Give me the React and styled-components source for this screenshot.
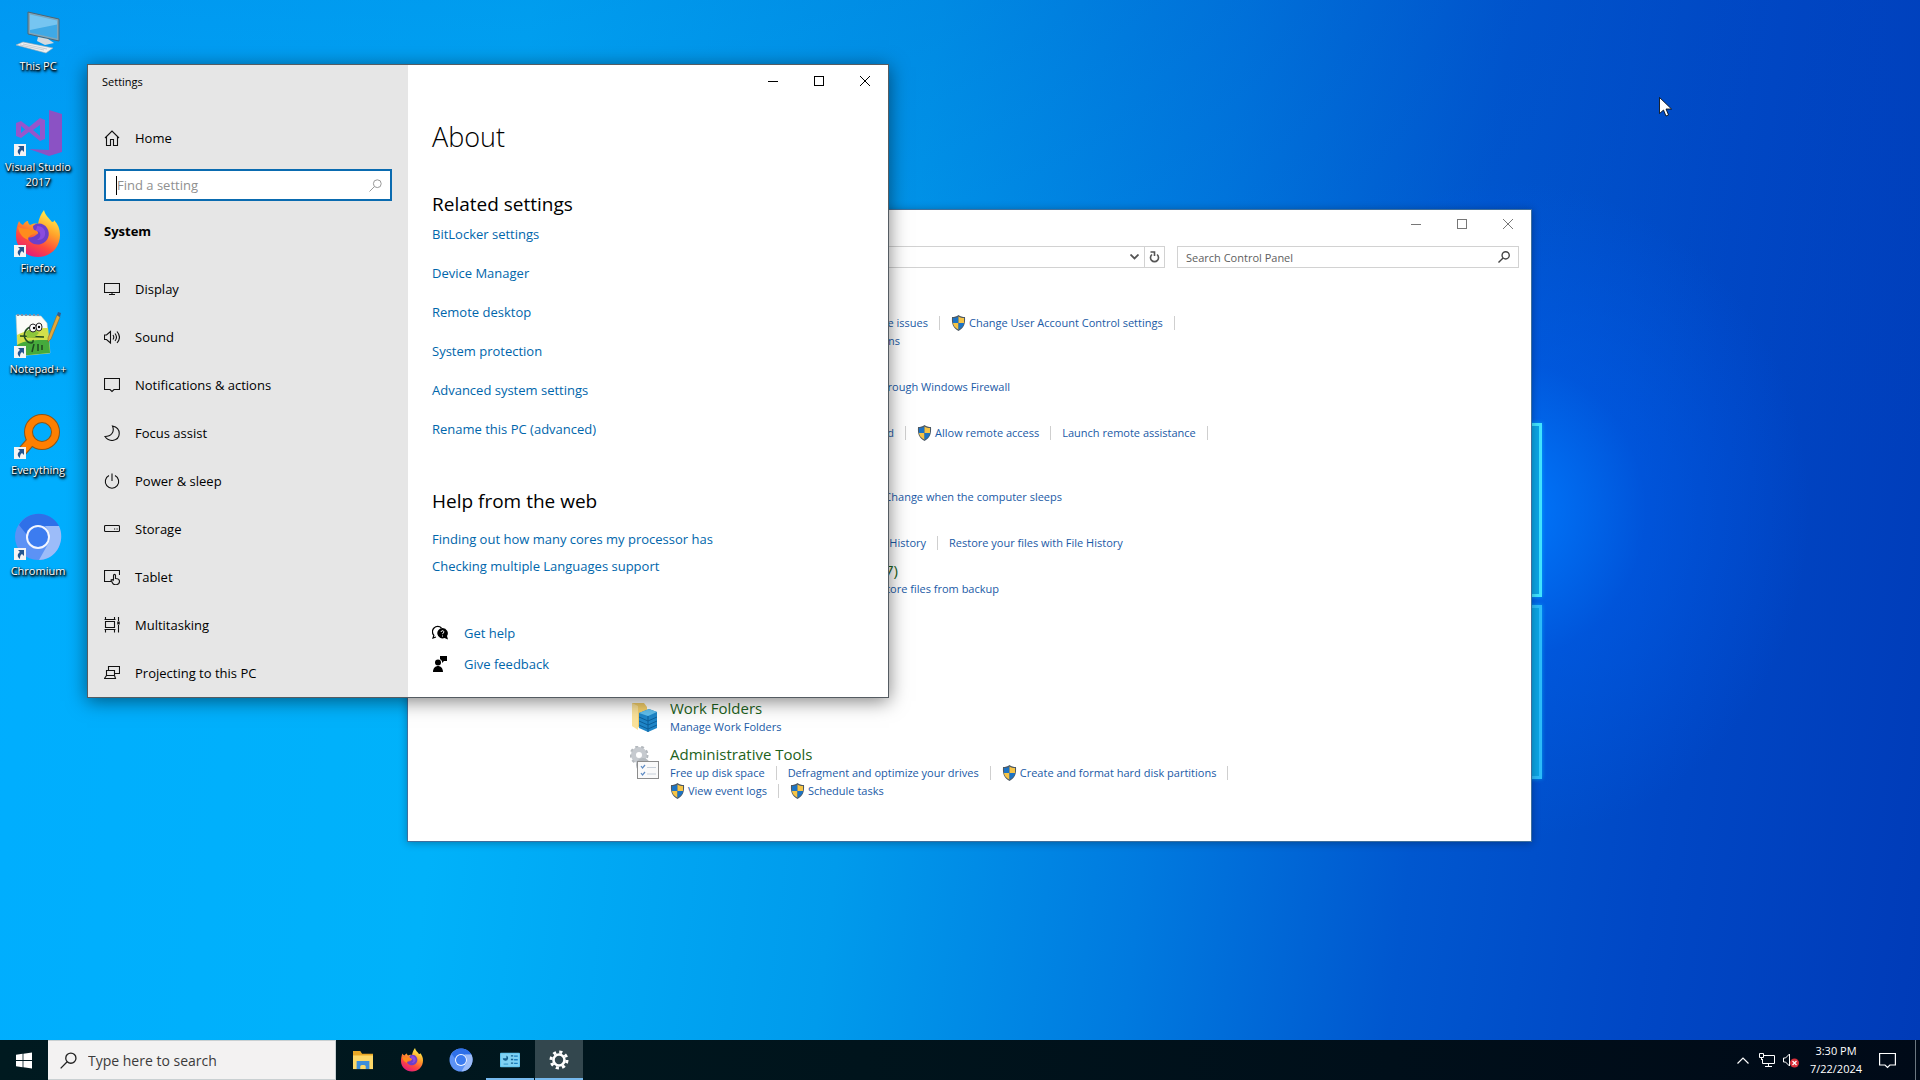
import React from 'react';
import styled, { createGlobalStyle, css } from 'styled-components';

const GlobalStyle = createGlobalStyle`
    * {
        box-sizing: border-box;
    }

    body {
        margin: 0;
        font-family: 'Open Sans', 'Noto Sans', sans-serif;
        font-size: 13px;
        color: #000;
    }

    button, input {
        font-family: inherit;
        font-size: inherit;
        color: inherit;
        border: 0;
        padding: 0;
        margin: 0;
        background: none;
    }

    h1, h2, h3, ul, p {
        margin: 0;
        padding: 0;
        font-weight: 400;
    }

    ul {
        list-style: none;
    }

    a {
        text-decoration: none;
    }

    svg {
        display: block;
        flex: none;
    }
`;

/* Desktop */

const Screen = styled.div`
    display: flex;
    flex-direction: column;
    min-height: 100vh;
`;

const Desktop = styled.main`
    position: relative;
    flex: 1;
    overflow: hidden;
    background:
        radial-gradient(ellipse 300px 330px at 1510px 510px, rgba(0, 122, 255, 0.95), rgba(0, 95, 240, 0.45) 45%, rgba(0, 90, 230, 0) 100%),
        linear-gradient(180deg, rgba(0, 70, 190, 0.2), rgba(0, 120, 220, 0) 45%),
        linear-gradient(97deg, #00adff 0%, #00b2fa 26%, #009bec 46%, #007adf 61%, #0057cf 74%, #0047c5 86%, #003bb8 100%);
`;

const LogoPanes = styled.div`
    position: absolute;
    left: 1370px;
    top: 423px;
    display: grid;
    gap: 8px;
`;

const Pane = styled.div`
    width: 172px;
    height: 174px;
    border: 3px solid ${({ $bright }) => ($bright ? '#41e4ff' : '#2cbcfa')};
    border-left: 0;
    background: #0ba4e4;
    box-shadow: 0 0 4px rgba(0, 200, 255, 0.6);
`;

const Shortcuts = styled.ul`
    width: 76px;
    display: flex;
    flex-direction: column;
`;

const Shortcut = styled.li`
    height: 101px;
    padding-top: 8px;

    a {
        display: flex;
        flex-direction: column;
        align-items: center;
        gap: 2px;
        color: #fff;
        font-size: 11px;
        line-height: 15px;
        text-align: center;
        text-shadow: 1px 1px 2px #000, 0 1px 2px #000, 1px 2px 3px #000;
    }
`;

const Cursor = styled.svg`
    position: absolute;
    left: 1659px;
    top: 97px;
`;

/* Windows */

const Frame = styled.section`
    position: absolute;
    background: #fff;
    border: 1px solid;

    ${({ $active }) => ($active ? css`
        border-color: #555c62;
        box-shadow: 0 3px 18px rgba(0, 0, 0, 0.5);
    ` : css`
        border-color: #3f6f9c;
        box-shadow: 0 1px 8px rgba(0, 0, 0, 0.3);
    `)}
`;

const SettingsFrame = styled(Frame)`
    left: 87px;
    top: 64px;
    width: 802px;
    display: grid;
    grid-template-columns: 2fr 3fr;
`;

const PanelFrame = styled(Frame)`
    left: 407px;
    top: 209px;
    width: 1125px;
`;

const Controls = styled.div`
    display: flex;
    justify-content: flex-end;
    color: ${({ $dim }) => ($dim ? '#777' : '#000')};

    button {
        width: 46px;
        height: ${({ $dim }) => ($dim ? '28px' : '32px')};
        display: grid;
        place-items: center;
    }
`;

const WindowControls = ({ dim }) => (
    <Controls $dim={dim}>
        <button type='button' aria-label='Minimize'>
            <svg width='10' height='10' stroke='currentColor'><path d='M0 5.5h10' /></svg>
        </button>
        <button type='button' aria-label='Maximize'>
            <svg width='10' height='10' stroke='currentColor' fill='none'><rect x='.5' y='.5' width='9' height='9' /></svg>
        </button>
        <button type='button' aria-label='Close'>
            <svg width='10' height='10' stroke='currentColor'><path d='M0 0l10 10M10 0L0 10' /></svg>
        </button>
    </Controls>
);

/* Settings window */

const Sidebar = styled.nav`
    background: #e6e6e6;
    padding: 0 16px;
`;

const SidebarTitle = styled.p`
    margin-left: -2px;
    font-size: 11px;
    line-height: 34px;
`;

const NavItem = styled.a`
    display: flex;
    align-items: center;
    gap: 15px;
    height: 48px;
    color: #000;
`;

const HomeItem = styled(NavItem)`
    margin: 15px 0 7px;
`;

const FindBox = styled.label`
    display: flex;
    align-items: center;
    height: 32px;
    padding: 0 8px 0 10px;
    border: 2px solid #0a6bb0;
    background: #fff;

    input {
        flex: 1;
        min-width: 0;
        outline: 0;
    }

    input::placeholder {
        color: #8f8f8f;
        opacity: 1;
    }
`;

const Caret = styled.span`
    width: 1px;
    height: 19px;
    background: #000;
`;

const SidebarHeading = styled.h2`
    font-size: 13px;
    font-weight: 700;
    line-height: 20px;
    margin: 20px 0 24px;
`;

const About = styled.div`
    h1 {
        padding-left: 24px;
        font-size: 27px;
        font-weight: 300;
        line-height: 40px;
        margin-top: 20px;
    }
`;

const Section = styled.div`
    padding-left: 24px;
    padding-top: ${({ $top }) => $top}px;
    display: flex;
    flex-direction: column;
    align-items: flex-start;

    h2 {
        font-size: 19px;
        line-height: 28px;
        margin-bottom: ${({ $gap }) => $gap}px;
    }
`;

const SettingLink = styled.a`
    display: flex;
    align-items: center;
    gap: 16px;
    height: ${({ $height }) => $height}px;
    color: #0066ab;
`;

/* Control Panel window */

const AddressRow = styled.div`
    display: grid;
    grid-template-columns: 757px 1fr;
    gap: 12px;
    padding: 8px 12px 0 0;
`;

const AddressBar = styled.div`
    display: flex;
    justify-content: flex-end;
    height: 22px;
    border: 1px solid #d2d2d2;

    button {
        width: 20px;
        display: grid;
        place-items: center;
        color: #555;
    }

    button + button {
        border-left: 1px solid #d2d2d2;
    }
`;

const PanelSearch = styled.label`
    display: flex;
    align-items: center;
    height: 22px;
    padding: 0 8px;
    border: 1px solid #d2d2d2;
    font-size: 11px;

    input {
        flex: 1;
        outline: 0;
    }

    input::placeholder {
        color: #606060;
        opacity: 1;
    }
`;

const Categories = styled.ul`
    padding: 26px 0 33px 222px;
`;

const Category = styled.li`
    display: grid;
    grid-template-columns: 40px 1fr;
    padding-bottom: 8px;

    svg.category-icon {
        margin-top: 2px;
    }
`;

const CategoryTitle = styled.h3`
    width: ${({ $width }) => ($width ? `${$width}px` : 'auto')};
    height: 20px;
    display: flex;
    justify-content: ${({ $width }) => ($width ? 'flex-end' : 'flex-start')};
    font-size: 15px;
    line-height: 20px;
    color: #1d6220;
    white-space: nowrap;
`;

const TaskLine = styled.div`
    display: flex;
    height: 18px;
    font-size: 11px;
    line-height: 18px;
    white-space: nowrap;
`;

const Lead = styled.div`
    width: ${({ $width }) => $width}px;
    display: flex;
    justify-content: flex-end;
`;

const Task = styled.a`
    display: flex;
    align-items: center;
    gap: 3px;
    color: #1a5aa6;
`;

const Divider = styled.span`
    width: 1px;
    height: 14px;
    margin: 2px 11px;
    background: #cfcfcf;
`;

/* Taskbar */

const Taskbar = styled.footer`
    display: flex;
    height: 40px;
    background: linear-gradient(90deg, #001a20, #00141c 45%, #000a18);
    color: #fff;
`;

const StartButton = styled.button`
    width: 48px;
    display: grid;
    place-items: center;
`;

const TaskSearch = styled.label`
    display: flex;
    align-items: center;
    gap: 11px;
    width: 288px;
    padding-left: 12px;
    margin-right: 3px;
    background: #f3f2f2;
    border: 1px solid #c9d0d2;
    border-left: 0;
    color: #222;

    input {
        flex: 1;
        min-width: 0;
        font-size: 14px;
        outline: 0;
    }

    input::placeholder {
        color: #3b3b3b;
        opacity: 1;
    }
`;

const AppButton = styled.button`
    width: 48px;
    margin-right: 1px;
    display: grid;
    place-items: center;
    background: ${({ $active }) => ($active ? '#33474e' : 'transparent')};
    box-shadow: ${({ $open }) => ($open ? 'inset 0 -2px #76b9ed' : 'none')};
`;

const Tray = styled.div`
    margin-left: auto;
    display: flex;
    align-items: center;

    > button {
        width: 24px;
        height: 40px;
        display: grid;
        place-items: center;
    }
`;

const Clock = styled.time`
    width: 66px;
    text-align: center;
    font-size: 11px;
    line-height: 18px;
`;

const ActionCenter = styled.button`
    && {
        width: 36px;
        margin: 0 10px 0 0;
    }
`;

const ShowDesktop = styled.button`
    && {
        width: 5px;
        border-left: 1px solid #6c7780;
    }
`;

/* Drawings */

const ShortcutArrow = () => (
    <g>
        <rect x='0' y='35' width='12' height='12' fill='#f4f4f4' />
        <path d='M4 37h6v6l-2-2c-2 1-2 3-2 5-3-2-3-5 0-7z' fill='#24558f' />
    </g>
);

const ThisPcIcon = () => (
    <svg width='48' height='48' viewBox='0 0 48 48'>
        <path d='M14 4l31 7v22L14 26z' fill='#7fa6bb' stroke='#4e6675' />
        <path d='M16 6.500l27 6v18l-27-6z' fill='#3fa9e6' />
        <path d='M16 6.500l27 6v4L16 22z' fill='#8fd2f5' opacity='.7' />
        <path d='M24 29l10 2 6 4-9 2-8-4z' fill='#d5dade' />
        <path d='M9 34l30 6-7 5L2 37z' fill='#eef0f2' stroke='#a3adb3' strokeWidth='.6' />
        <path d='M9 36l24 5M6 37l24 5' stroke='#b8bfc4' strokeWidth='.7' />
    </svg>
);

const VisualStudioIcon = () => (
    <svg width='48' height='48' viewBox='0 0 48 48'>
        <path d='M35 1l13 4v38l-13 4-20-7 20 1z' fill='#8b52c4' />
        <path d='M2 14l5-2 8 6 11-9 5 2v19l-5 2-11-9-8 6-5-2zm5 3v7l4-3.500zm19-1l-7 5 7 6z' fill='#9556cc' fillRule='evenodd' />
        <ShortcutArrow />
    </svg>
);

const FirefoxIcon = ({ size, shortcut }) => (
    <svg width={size} height={size} viewBox='0 0 48 48'>
        <defs>
            <linearGradient id='fox' x1='.8' y1='0' x2='.3' y2='1'>
                <stop offset='.05' stopColor='#fff14f' />
                <stop offset='.4' stopColor='#ffa22a' />
                <stop offset='.7' stopColor='#ff4a3d' />
                <stop offset='1' stopColor='#e2197f' />
            </linearGradient>
        </defs>
        <path d='M5 11c1 2 2 3 4 4 1-2 3-4 5-4 0 2 1 3 2 4 2-1 5-2 8-1 1-6 3-10 6-14 1 5 5 8 8 12 2 0 2-1 2-2 4 4 6 9 6 15 0 13-10 22-22 22S2 38 2 26c0-6 1-11 3-15z' fill='url(#fox)' />
        <path d='M19 16c4-4 11-3 14 2 4 6 1 14-6 16-6 2-13-2-13-7 2 1 6 0 8-2 2-1 3-2 1-4-2 0-4-1-4-5z' fill='#6d3fc9' />
        <path d='M23 16c6 0 9 4 8 9-1 4-4 5-8 5 3-2 4-4 3-7-1-2-3-2-5-2 1-1 2-3 2-5z' fill='#8a4be0' />
        <path d='M4 17c3 1 7 2 10 2 4 1 7 1 9 2-1 3-5 3-7 5-2 1-2 3-2 4-7-3-9-8-10-13z' fill='#ff8c1d' />
        {shortcut && <ShortcutArrow />}
    </svg>
);

const NotepadIcon = () => (
    <svg width='48' height='48' viewBox='0 0 48 48'>
        <path d='M2 4l25 1 6 7 3 30-32 3z' fill='#fbfcf7' stroke='#c0c8c0' strokeWidth='.6' />
        <path d='M3 24c10-5 20-7 31-7l2 25-32 3z' fill='#d3e04a' />
        <path d='M3 34c10-6 22-5 32-5l1 13-32 3z' fill='#45aa3c' />
        <path d='M3 4h24' stroke='#7e8fa8' strokeWidth='2' strokeDasharray='2 2' />
        <path d='M16 16c-6 3-7 9-4 13 3 4 8 4 7 0M6 25l24 1M20 33l-2 8M24 33v7M28 34v5' fill='none' stroke='#1f4a20' strokeWidth='1.500' />
        <path d='M12 21c3-4 9-3 13 1l-4 4-8 1z' fill='#8cc63a' />
        <ellipse cx='19' cy='17' rx='3.500' ry='4' fill='#fff' stroke='#222' />
        <ellipse cx='25' cy='16' rx='3' ry='4' fill='#fff' stroke='#222' />
        <circle cx='20' cy='17' r='1.200' /><circle cx='25' cy='16' r='1.200' />
        <path d='M34 27l9-23 3 2-9 22-3 3z' fill='#e2a93a' stroke='#8f6a25' strokeWidth='.6' />
        <path d='M43 4l1-3 3 1-1 4z' fill='#335d8c' />
        <ShortcutArrow />
    </svg>
);

const EverythingIcon = () => (
    <svg width='48' height='48' viewBox='0 0 48 48'>
        <path d='M18 28L5 43' stroke='#8a5518' strokeWidth='10' />
        <circle cx='28' cy='20' r='13.500' fill='none' stroke='#8a5518' strokeWidth='9' />
        <circle cx='28' cy='20' r='13.500' fill='none' stroke='#ff7f00' strokeWidth='7' />
        <path d='M18 28L5 43' stroke='#ff7f00' strokeWidth='8' />
        <ShortcutArrow />
    </svg>
);

const ChromiumIcon = ({ size, shortcut }) => (
    <svg width={size} height={size} viewBox='0 0 48 48'>
        <circle cx='24' cy='24' r='23' fill='#5c92f5' />
        <path d='M5 12C14-3 36-3 45 13H24c-6 0-10 4-11 9z' fill='#2f70e8' />
        <path d='M45 13c7 15-3 34-20 34l9-16c3-5 3-12-3-18z' fill='#9cbcf9' />
        <circle cx='24' cy='24' r='12' fill='#f2f6ff' />
        <circle cx='24' cy='24' r='10' fill='#3c7cf0' />
        {shortcut && <ShortcutArrow />}
    </svg>
);

const Line = ({ children }) => (
    <svg width='16' height='16' viewBox='0 0 16 16' fill='none' stroke='#111' strokeWidth='1.100'>{children}</svg>
);

const HomeIcon = () => <Line><path d='M1 8l7-7 7 7M2.500 7v8.500h4V9.500h3v6h4V7' /></Line>;
const DisplayIcon = () => <Line><path d='M.5 2.500h15v9H.5zM8 11.500v2M5 13.500h6' /></Line>;
const SoundIcon = () => <Line><path d='M.5 6v4.500h2l4 3.500V2.500L2.500 6zM9 6c1 1.500 1 3 0 4.500M11 4.500c2 2.500 2 5 0 7.500M13 2.500c3 3.500 3 8 0 11.500' /></Line>;
const NotificationIcon = () => <Line><path d='M.5 1.500h15v11H10l-2 2-2-2H.5z' /></Line>;
const MoonIcon = () => <Line><path d='M8.500 1c9 2 9 13 0 14.500-3 0-5.500-1-7.500-4C7 11.500 11 7 8.500 1z' /></Line>;
const PowerIcon = () => <Line><path d='M8 .5V8M5 2.500a6.700 6.700 0 1 0 6 0' /></Line>;
const StorageIcon = () => <Line><rect x='.5' y='4.500' width='15' height='6' rx='1' /><path d='M10 8h1.200M12.500 8h1.200' /></Line>;
const TabletIcon = () => <Line><path d='M7 12.500H.5v-11h15V6M9.500 11V6.500c0-1.500 2-1.500 2 0v3c3 0 4 1 4 3 0 4-6 4-7 1.500L7 11c1-1 1.500-.5 2.500 1' /></Line>;
const MultitaskIcon = () => (
    <Line>
        <path d='M.5 2.500h11M.5 12.500h11M1.500 4.500h9v6h-9zM1.500 0v3M10.500 0v3M1.500 12v3.500M10.500 12v3.500M14.500 0v4M14.500 8v7.500' />
        <path d='M14.500 4.500v3' strokeWidth='2.500' />
    </Line>
);
const ProjectIcon = () => <Line><path d='M4.500 5.500v-4h11v7h-5M2.500 5.500h8v5h-8zM2.500 10.500L.5 13.500h11l-1-3' /></Line>;

const HelpIcon = () => (
    <svg width='16' height='16' viewBox='0 0 16 16'>
        <path d='M2 10.500A5 5 0 1 1 9.500 3M2 10L1 13l3-1' fill='none' stroke='#000' strokeWidth='1.200' />
        <path d='M10.500 3a5.200 5.200 0 0 1 4.500 8l1 3.500-3.500-1.500A5.200 5.200 0 1 1 10.500 3z' />
        <path d='M9 7c.3-2 3.300-1.500 2.800.2-.3.9-1.300.9-1.300 2M10.500 10.500v1' fill='none' stroke='#fff' />
    </svg>
);

const FeedbackIcon = () => (
    <svg width='16' height='16' viewBox='0 0 16 16'>
        <circle cx='6' cy='6.500' r='3' />
        <path d='M1 16c0-8 10-8 10 0zM8 0h7v5h-3l-2 2V5L8 3z' />
    </svg>
);

const Magnifier = ({ size = 13, color, width = 1.2 }) => (
    <svg width={size} height={size} viewBox='0 0 13 13' fill='none' stroke={color} strokeWidth={width}>
        <circle cx='8.300' cy='4.700' r='3.900' />
        <path d='M5.500 7.500L.5 12.500' />
    </svg>
);

const ShieldIcon = () => (
    <svg width='15' height='16' viewBox='0 0 15 16'>
        <path d='M7.500 0c2 1.500 4 2 6.500 2 .5 7-1 11-6.500 14C2 13 .5 9 1 2c2.500 0 4.500-.5 6.500-2z' fill='#4d5964' />
        <path d='M7.500 1.500V8H2V3c2 0 3.800-.4 5.500-1.500z' fill='#1c73c4' />
        <path d='M7.500 1.500V8H13V3c-2 0-3.800-.4-5.500-1.500z' fill='#f6c445' />
        <path d='M2 8h5.500v6.700C4 13 2.300 11 2 8z' fill='#f6c445' />
        <path d='M13 8H7.500v6.700C11 13 12.700 11 13 8z' fill='#1c73c4' />
    </svg>
);

const WorkFoldersIcon = () => (
    <svg className='category-icon' width='32' height='32' viewBox='0 0 32 32'>
        <path d='M2 3h12l3 4v22L2 26z' fill='#f3cf6b' />
        <path d='M2 3l6 3v24l-6-4z' fill='#fbe29a' />
        <path d='M9 13l10-4 8 3v16l-9 4-9-4z' fill='#1f86c8' />
        <path d='M9 13l9 3 9-4-8-3z' fill='#62c0ee' />
        <path d='M9 17l9 4 9-4M9 21l9 4 9-4M9 25l9 4 9-4M18 16v16' fill='none' stroke='#0d5f9a' />
    </svg>
);

const AdminToolsIcon = () => (
    <svg className='category-icon' width='32' height='34' viewBox='0 0 32 34'>
        <circle cx='9' cy='9' r='5.500' fill='none' stroke='#c6cacf' strokeWidth='5' />
        <circle cx='9' cy='9' r='8.500' fill='none' stroke='#b4b9be' strokeWidth='2' strokeDasharray='3 3' />
        <circle cx='13' cy='19' r='5' fill='none' stroke='#b4b9be' strokeWidth='4' />
        <rect x='7.500' y='15.500' width='21' height='17' fill='#fafafa' stroke='#8c8c8c' />
        <path d='M11 20l1.500 2 2.500-3M11 27l1.500 2 2.500-3' fill='none' stroke='#5f8cc4' strokeWidth='1.200' />
        <path d='M17 21.500h9M17 28h9' stroke='#c8d0da' />
    </svg>
);

const StartIcon = () => (
    <svg width='16' height='17' viewBox='0 0 16 16' fill='#fff'>
        <path d='M0 2.200L6.600 1.300v6.300H0zM7.400 1.200L16 0v7.600H7.400zM0 8.400h6.600v6.300L0 13.800zM7.400 8.400H16V16l-8.600-1.200z' />
    </svg>
);

const ExplorerIcon = () => (
    <svg width='22' height='20' viewBox='0 0 24 22'>
        <path d='M1 1h8l2 3h12v17H1z' fill='#e9a826' />
        <path d='M1 6h22v15H1z' fill='#fdd868' />
        <path d='M5 12h14v9h-4v-3c0-2-6-2-6 0v3H5z' fill='#3d8edb' />
    </svg>
);

const PanelAppIcon = () => (
    <svg width='20' height='16' viewBox='0 0 22 16'>
        <rect width='22' height='16' rx='1' fill='#5cc2ee' />
        <rect x='1' y='1' width='20' height='14' fill='#7fd2f4' />
        <path d='M3 6a3 3 0 1 0 4-3v3z' fill='#14608f' />
        <path d='M4 12.500h5' stroke='#2b8ec4' />
        <path d='M12 3.500h2.500M12 7.500h2.500M12 11.500h2.500' stroke='#14608f' strokeWidth='1.500' />
        <path d='M15.500 3h4v1.500h-4zM15.500 7h4v1.500h-4zM15.500 11h4v1.500h-4z' fill='#1a7fc0' />
    </svg>
);

const GearIcon = () => (
    <svg width='20' height='20' viewBox='0 0 20 20' fill='none' stroke='#fff'>
        <circle cx='10' cy='10' r='5.500' strokeWidth='2.600' />
        <circle cx='10' cy='10' r='8' strokeWidth='3' strokeDasharray='3.140 3.140' />
    </svg>
);

/* Content */

const shortcuts = [
    { name: 'This PC', icon: <ThisPcIcon /> },
    { name: 'Visual Studio 2017', icon: <VisualStudioIcon /> },
    { name: 'Firefox', icon: <FirefoxIcon size={48} shortcut /> },
    { name: 'Notepad++', icon: <NotepadIcon /> },
    { name: 'Everything', icon: <EverythingIcon /> },
    { name: 'Chromium', icon: <ChromiumIcon size={48} shortcut /> },
];

const navItems = [
    { label: 'Display', icon: <DisplayIcon /> },
    { label: 'Sound', icon: <SoundIcon /> },
    { label: 'Notifications & actions', icon: <NotificationIcon /> },
    { label: 'Focus assist', icon: <MoonIcon /> },
    { label: 'Power & sleep', icon: <PowerIcon /> },
    { label: 'Storage', icon: <StorageIcon /> },
    { label: 'Tablet', icon: <TabletIcon /> },
    { label: 'Multitasking', icon: <MultitaskIcon /> },
    { label: 'Projecting to this PC', icon: <ProjectIcon /> },
];

const relatedLinks = [
    'BitLocker settings',
    'Device Manager',
    'Remote desktop',
    'System protection',
    'Advanced system settings',
    'Rename this PC (advanced)',
];

const helpLinks = [
    'Finding out how many cores my processor has',
    'Checking multiple Languages support',
];

// lead: task whose right edge sits at a fixed column, wraps: line goes on below
const categories = [
    {
        title: 'Security and Maintenance',
        lines: [
            { lead: 'Review your computer\'s status and resolve issues', width: 258, tasks: [['Change User Account Control settings', true]], wraps: true },
            { lead: 'Troubleshoot common computer problems', width: 230, tasks: [] },
        ],
    },
    { title: 'Windows Defender Firewall', lines: [{ lead: 'Allow an app through Windows Firewall', width: 340, tasks: [] }] },
    {
        title: 'System',
        lines: [
            { lead: 'View amount of RAM and processor speed', width: 224, tasks: [['Allow remote access', true], ['Launch remote assistance']], wraps: true },
            { tasks: [['See the name of this computer']] },
        ],
    },
    { title: 'Power Options', lines: [{ lead: 'Change when the computer sleeps', width: 392, tasks: [] }] },
    { lines: [{ lead: 'Save files with File History', width: 256, tasks: [['Restore your files with File History']] }] },
    { title: 'Backup and Restore (Windows 7)', titleWidth: 228, lines: [{ lead: 'Restore files from backup', width: 329, tasks: [] }] },
    { title: 'BitLocker Drive Encryption', lines: [{ tasks: [['Manage BitLocker']] }] },
    { title: 'Storage Spaces', lines: [{ tasks: [['Manage Storage Spaces']] }] },
    { title: 'Work Folders', icon: <WorkFoldersIcon />, lines: [{ tasks: [['Manage Work Folders']] }] },
    {
        title: 'Administrative Tools',
        icon: <AdminToolsIcon />,
        lines: [
            { tasks: [['Free up disk space'], ['Defragment and optimize your drives'], ['Create and format hard disk partitions', true]], wraps: true },
            { tasks: [['View event logs', true], ['Schedule tasks', true]] },
        ],
    },
];

const CategoryLine = ({ line }) => (
    <TaskLine>
        {line.lead && <Lead $width={line.width}><Task href='#'>{line.lead}</Task></Lead>}
        {line.tasks.map(([label, admin], i) => (
            <React.Fragment key={label}>
                {(i > 0 || line.lead) && <Divider />}
                <Task href='#'>{admin && <ShieldIcon />}{label}</Task>
            </React.Fragment>
        ))}
        {line.wraps && <Divider />}
    </TaskLine>
);

const ControlPanelWindow = () => (
    <PanelFrame aria-label='Control Panel'>
        <WindowControls dim />
        <AddressRow>
            <AddressBar>
                <button type='button' aria-label='Previous locations'>
                    <svg width='9' height='6' fill='none' stroke='currentColor' strokeWidth='1.800'><path d='M.5.5l4 4 4-4' /></svg>
                </button>
                <button type='button' aria-label='Refresh'>
                    <svg width='11' height='12' viewBox='0 0 11 12' fill='none' stroke='currentColor' strokeWidth='1.600'>
                        <path d='M3 3.500a4 4 0 1 0 5 0M1.500 1h4v4' />
                    </svg>
                </button>
            </AddressBar>
            <PanelSearch>
                <input type='search' placeholder='Search Control Panel' aria-label='Search Control Panel' />
                <Magnifier size={12} color='#444' width={1.5} />
            </PanelSearch>
        </AddressRow>
        <Categories>
            {categories.map((category, index) => (
                <Category key={index}>
                    {category.icon || <span />}
                    <div>
                        <CategoryTitle $width={category.titleWidth}>{category.title}</CategoryTitle>
                        {category.lines.map((line, i) => <CategoryLine key={i} line={line} />)}
                    </div>
                </Category>
            ))}
        </Categories>
    </PanelFrame>
);

const SettingsWindow = () => (
    <SettingsFrame $active aria-label='Settings'>
        <Sidebar>
            <SidebarTitle>Settings</SidebarTitle>
            <HomeItem href='#'><HomeIcon />Home</HomeItem>
            <FindBox>
                <Caret />
                <input type='text' placeholder='Find a setting' aria-label='Find a setting' />
                <Magnifier color='#999' width={1} />
            </FindBox>
            <SidebarHeading>System</SidebarHeading>
            {navItems.map(({ label, icon }) => (
                <NavItem key={label} href='#'>{icon}{label}</NavItem>
            ))}
        </Sidebar>
        <About>
            <WindowControls />
            <h1>About</h1>
            <Section $top={33} $gap={-4}>
                <h2>Related settings</h2>
                {relatedLinks.map((label) => <SettingLink key={label} $height={39} href='#'>{label}</SettingLink>)}
            </Section>
            <Section $top={39} $gap={10}>
                <h2>Help from the web</h2>
                {helpLinks.map((label) => <SettingLink key={label} $height={27} href='#'>{label}</SettingLink>)}
            </Section>
            <Section $top={38}>
                <SettingLink $height={31} href='#'><HelpIcon />Get help</SettingLink>
                <SettingLink $height={31} href='#'><FeedbackIcon />Give feedback</SettingLink>
            </Section>
        </About>
    </SettingsFrame>
);

const App = () => {
    return (
        <Screen>
            <GlobalStyle />
            <Desktop>
                <LogoPanes>
                    <Pane $bright />
                    <Pane />
                </LogoPanes>
                <Shortcuts>
                    {shortcuts.map(({ name, icon }) => (
                        <Shortcut key={name}><a href='#'>{icon}{name}</a></Shortcut>
                    ))}
                </Shortcuts>
                <ControlPanelWindow />
                <SettingsWindow />
                <Cursor width='13' height='20' viewBox='0 0 13 20'>
                    <path d='M.5.500v16l4-3.500 2.500 6 2.500-1-2.500-6h5.500z' fill='#fff' stroke='#000' strokeWidth='.8' />
                </Cursor>
            </Desktop>
            <Taskbar>
                <StartButton type='button' aria-label='Start'><StartIcon /></StartButton>
                <TaskSearch>
                    <Magnifier size={17} color='#222' width={1} />
                    <input type='text' placeholder='Type here to search' aria-label='Type here to search' />
                </TaskSearch>
                <AppButton type='button' aria-label='File Explorer'><ExplorerIcon /></AppButton>
                <AppButton type='button' aria-label='Firefox'><FirefoxIcon size={24} /></AppButton>
                <AppButton type='button' aria-label='Chromium'><ChromiumIcon size={24} /></AppButton>
                <AppButton type='button' aria-label='Control Panel' $open><PanelAppIcon /></AppButton>
                <AppButton type='button' aria-label='Settings' $open $active><GearIcon /></AppButton>
                <Tray>
                    <button type='button' aria-label='Show hidden icons'>
                        <svg width='12' height='7' fill='none' stroke='#fff' strokeWidth='1.200'><path d='M.5 6.500L6 1l5.500 5.500' /></svg>
                    </button>
                    <button type='button' aria-label='Network'>
                        <svg width='16' height='14' viewBox='0 0 16 14' fill='none' stroke='#fff'>
                            <path d='M5 2.500h10.500v8H3.500V6M9.500 10.500v3M6 13.500h7M.5.500h4v4h-4zM2.500 4.500V7' />
                        </svg>
                    </button>
                    <button type='button' aria-label='Volume muted'>
                        <svg width='16' height='15' viewBox='0 0 16 15'>
                            <path d='M.5 5v4h2l4 4V1l-4 4z' fill='none' stroke='#fff' />
                            <circle cx='11.500' cy='10' r='4.500' fill='#d9303a' />
                            <path d='M9.500 8l4 4M13.500 8l-4 4' stroke='#fff' strokeWidth='1.200' />
                        </svg>
                    </button>
                    <Clock>3:30 PM<br />7/22/2024</Clock>
                    <ActionCenter type='button' aria-label='Action center'>
                        <svg width='17' height='17' fill='none' stroke='#fff' strokeWidth='1.200'><path d='M.6 1.500h15.800v11.500h-5.500l-2.400 2.500L6 13H.6z' /></svg>
                    </ActionCenter>
                    <ShowDesktop type='button' aria-label='Show desktop' />
                </Tray>
            </Taskbar>
        </Screen>
    );
};

export default App;
